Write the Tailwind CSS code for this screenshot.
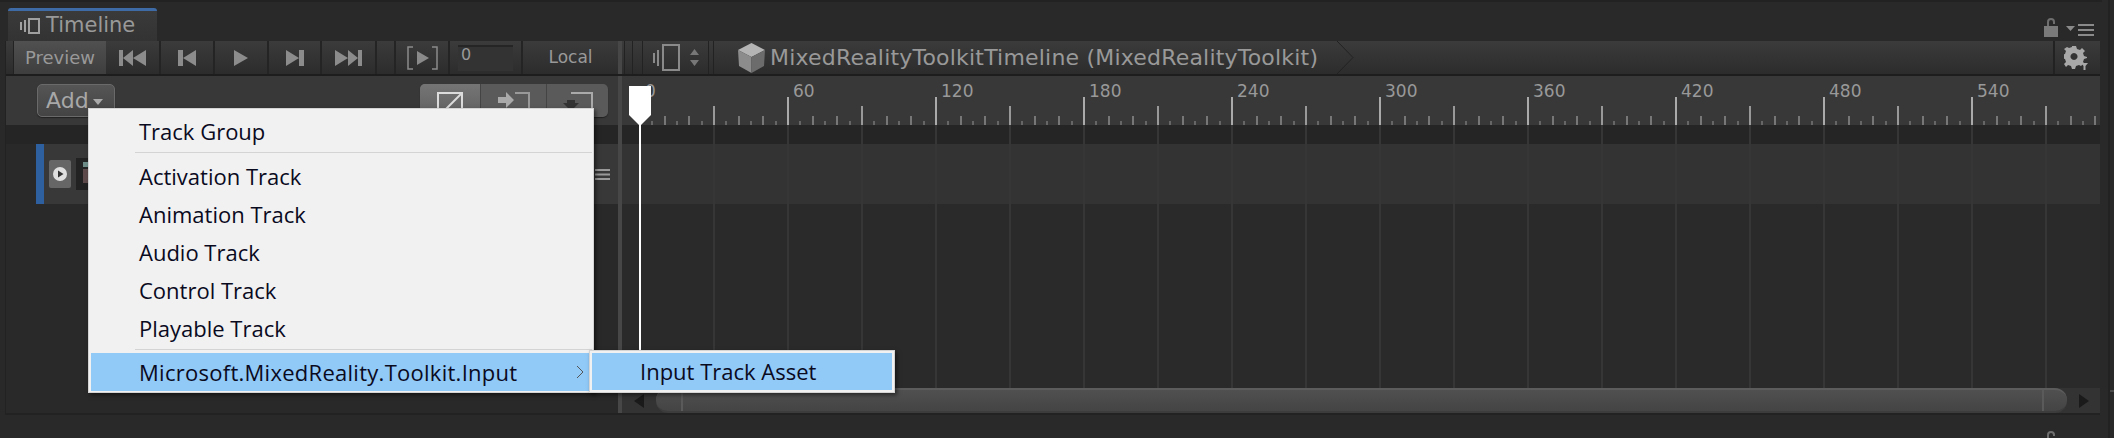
<!DOCTYPE html>
<html lang="en">
  <head>
    <meta charset="UTF-8" />
    <title>Timeline</title>
    <script src="https://cdn.jsdelivr.net/npm/@tailwindcss/browser@4"></script>
  </head>
  <body class="relative w-[2114px] h-[438px] overflow-hidden bg-[#292929] font-['DejaVu_Sans',sans-serif] text-[#999]">
    <div class="h-[2px] w-[2102px] bg-[#222]"></div>

    <!-- tab bar -->
    <div class="relative h-[39px] pl-[8px] pt-[6px]">
      <div class="flex h-[33px] w-[149px] items-center gap-[6px] rounded-t-[3px] border-t-[3px] border-[#3e6ba5] bg-gradient-to-b from-[#3a3a3a] to-[#333] pl-[12px] text-[21px] text-[#999]">
        <svg width="20" height="16" viewBox="0 0 20 16" fill="none" stroke="#a0a0a0" stroke-width="2"><path d="M1 4v8M5 2v12"/><rect x="9" y="1" width="10" height="14"/></svg>
        <span>Timeline</span>
      </div>
      <svg class="absolute left-[2044px] top-[16px]" width="14" height="19" viewBox="0 0 14 19" fill="none"><path d="M4 9V4a3 3 0 0 1 6 0v2" stroke="#6e6e6e" stroke-width="2"/><rect y="8" width="14" height="11" fill="#7a7a7a"/></svg>
      <svg class="absolute left-[2066px] top-[22px]" width="28" height="12" viewBox="0 0 28 12" fill="#8a8a8a"><path d="M0 2h9L4.500 7z"/><path d="M12 0h16v2H12zM12 5h16v2H12zM12 10h16v2H12z"/></svg>
    </div>

    <!-- panel -->
    <div class="ml-[5px] h-[374px] w-[2095px] border-b-2 border-l border-[#222]">
      <!-- toolbar -->
      <div class="flex h-[35px] border-b-2 border-[#1d1d1d] bg-gradient-to-b from-[#3b3b3b] to-[#2c2c2c] text-[17px] text-[#999]">
        <div class="flex w-[8px] border-r border-[#222]"></div>
        <div class="flex w-[92px] items-center justify-center bg-gradient-to-b from-[#505050] to-[#3e3e3e] text-[18px]">Preview</div>
        <div class="flex w-[55px] items-center justify-center border-r-2 border-[#242424]">
          <svg width="27" height="16" viewBox="0 0 27 16" fill="#8c8c8c"><path d="M0 0h4v16H0zM14 0v16L4 8zM27 0v16L14 8z"/></svg>
        </div>
        <div class="flex w-[54px] items-center justify-center border-r-2 border-[#242424]">
          <svg width="18" height="16" viewBox="0 0 18 16" fill="#8c8c8c"><path d="M0 0h5v16H0zM18 0v16L5 8z"/></svg>
        </div>
        <div class="flex w-[54px] items-center justify-center border-r-2 border-[#242424]">
          <svg width="14" height="16" viewBox="0 0 14 16" fill="#8c8c8c"><path d="M0 0v16l14-8z"/></svg>
        </div>
        <div class="flex w-[53px] items-center justify-center border-r-2 border-[#242424]">
          <svg width="18" height="16" viewBox="0 0 18 16" fill="#8c8c8c"><path d="M0 0v16l13-8zM13 0h5v16h-5z"/></svg>
        </div>
        <div class="flex w-[55px] items-center justify-center border-r-2 border-[#242424]">
          <svg width="27" height="16" viewBox="0 0 27 16" fill="#8c8c8c"><path d="M0 0v16l13-8zM13 0v16l10-8zM23 0h4v16h-4z"/></svg>
        </div>
        <div class="w-[19px] border-r-2 border-[#242424]"></div>
        <div class="flex w-[54px] items-center justify-center border-r-2 border-[#242424]">
          <svg width="31" height="24" viewBox="0 0 31 24" fill="none" stroke="#8a8a8a" stroke-width="1.500"><path d="M6 1H1v22h5M25 1h5v22h-5"/><path d="M10 5v14l12-7z" fill="#8a8a8a" stroke="none"/></svg>
        </div>
        <div class="flex w-[73px] items-center justify-center border-r-2 border-[#242424]">
          <div class="h-[26px] w-[55px] border-t-2 border-[#252525] bg-[#333] pl-[3px] text-[16px] leading-[15px]">0</div>
        </div>
        <div class="flex w-[95px] items-center justify-center">Local</div>
        <div class="w-[4px] bg-[#474747]"></div>
        <div class="w-[2px]"></div>
        <div class="w-[9px] border-x border-[#222]"></div>
        <div class="w-[10px] border-r border-[#222]"></div>
        <div class="flex w-[65px] items-center gap-[10px] pl-[10px]">
          <svg width="27" height="29" viewBox="0 0 27 29" fill="none" stroke="#8a8a8a" stroke-width="2"><path d="M1 10v10M5 7v16"/><rect x="10" y="2" width="16" height="25"/></svg>
          <svg width="9" height="17" viewBox="0 0 9 17" fill="#777"><path d="M4.500 0L9 6H0zM4.500 17L0 11h9z"/></svg>
        </div>
        <div class="w-[6px] border-x border-[#222]"></div>
        <div class="flex flex-1 items-center">
          <svg class="ml-[24px]" width="27" height="30" viewBox="0 0 27 30"><path d="M13.500 0L27 7l-13.500 7L0 7z" fill="#b4b4b4"/><path d="M0 7l13.500 7v16L1 23z" fill="#8c8c8c"/><path d="M27 7l-13.500 7v16L26 23z" fill="#6c6c6c"/></svg>
          <span class="ml-[5px] text-[22px] tracking-[0.2px]">MixedRealityToolkitTimeline (MixedRealityToolkit)</span>
          <svg class="ml-[19px]" width="17" height="33" viewBox="0 0 17 33" fill="none" stroke="#222" stroke-width="1"><path d="M0 0l16 16.500L0 33"/></svg>
        </div>
        <div class="flex w-[47px] items-center border-l-2 border-[#222] pl-[9px]">
          <svg width="24" height="24" viewBox="0 0 24 24" fill="#a8a8a8"><path fill-rule="evenodd" d="M8 0h4l1 3 3 1 2-2 3 3-2 2 1 3 3 1v1l-3 1-1 3 1 1-3 3-2-1-3 1-1 3H8l-1-3-3-1-2 2-2-3 2-2-1-3-3-1h0V9l3-1 1-3-2-2 3-2 2 1 3-1zM10 7a3.500 3.500 0 1 0 .01 0z"/><path d="M17 17h7l-2.500 3v4h-2v-4z"/></svg>
        </div>
      </div>

      <div class="flex h-[337px]">
        <!-- track list -->
        <div class="w-[612px]">
          <div class="flex h-[49px] items-start bg-[#383838] pt-[8px]">
            <div class="ml-[31px] flex h-[33px] w-[78px] items-center rounded-[5px] border border-[#6a6a6a] bg-gradient-to-b from-[#555] to-[#444] pl-[8px] text-[22px] text-[#a8a8a8] shadow-[0_1px_1px_#222]">
              Add
              <svg class="ml-[4px] mt-[3px]" width="10" height="6" viewBox="0 0 10 6" fill="#aaa"><path d="M0 0h10L5 6z"/></svg>
            </div>
            <div class="ml-auto mr-[10px] flex h-[33px] w-[188px] rounded-[5px] bg-[#5a5a5a] shadow-[0_1px_1px_#222]">
              <div class="flex w-[61px] justify-center rounded-l-[5px] border-r border-[#444] bg-gradient-to-b from-[#757575] to-[#606060] pt-[8px]">
                <svg width="26" height="26" viewBox="0 0 26 26" fill="none" stroke="#dcdcdc" stroke-width="2"><rect x="1" y="1" width="24" height="24"/><path d="M1 25L25 1"/></svg>
              </div>
              <div class="flex w-[66px] justify-center border-r border-[#444] pt-[8px]">
                <svg width="32" height="20" viewBox="0 0 32 20" fill="#aaa"><path d="M0 5h8V0l8 8-8 8v-5H0z"/><path d="M17 1h14v16H20" fill="none" stroke="#999" stroke-width="2"/></svg>
              </div>
              <div class="flex flex-1 justify-center pt-[8px]">
                <svg width="30" height="20" viewBox="0 0 30 20" fill="#333"><path d="M8 1h21v16H8" fill="none" stroke="#aaa" stroke-width="2"/><path d="M4 8h8v3h4l-8 8-8-8h4z"/></svg>
              </div>
            </div>
          </div>
          <div class="h-[19px] bg-[#252525]"></div>
          <div class="ml-[30px] flex h-[60px] items-center border-l-[8px] border-[#2e5f9e] bg-[#383838] pl-[5px]">
            <div class="flex h-[28px] w-[22px] items-center justify-center rounded-[2px] bg-[#666]">
              <svg width="14" height="14" viewBox="0 0 14 14"><circle cx="7" cy="7" r="7" fill="#e0e0e0"/><path d="M5 3.500v7L10.500 7z" fill="#333"/></svg>
            </div>
            <svg class="ml-[5px]" width="14" height="32" viewBox="0 0 14 32"><rect width="14" height="32" fill="#222"/><rect x="7" y="4" width="7" height="5" fill="#6d8c88"/><rect x="7" y="11" width="7" height="14" fill="#5e4a4a"/></svg>
            <svg class="ml-auto mr-[8px]" width="15" height="11" viewBox="0 0 15 11" fill="#999"><path d="M0 0h15v2H0zM0 4.500h15v2H0zM0 9h15v2H0z"/></svg>
          </div>
        </div>

        <!-- splitter -->
        <div class="w-[4px] bg-[#474747]"></div>

        <!-- timeline -->
        <div class="relative flex flex-1 flex-col">
          <div class="h-[49px] bg-[#383838]"></div>
          <div class="h-[19px] bg-[#252525]"></div>
          <div class="h-[60px] bg-[#333]"></div>
          <div class="h-[184px] bg-[#2a2a2a]"></div>
          <!-- scrollbar -->
          <div class="flex h-[25px] items-stretch bg-[#333]">
            <div class="flex w-[34px] items-center justify-center">
              <svg width="10" height="14" viewBox="0 0 10 14" fill="#1a1a1a"><path d="M10 0v14L0 7z"/></svg>
            </div>
            <div class="flex w-[1411px] rounded-[12px] border-t-2 border-b-2 border-t-[#5c5c5c] border-b-[#3c3c3c] bg-gradient-to-b from-[#505050] to-[#444]">
              <div class="w-[27px] border-r-2 border-[#5a5a5a]"></div>
              <div class="flex-1 border-r-2 border-[#5a5a5a]"></div>
              <div class="w-[23px]"></div>
            </div>
            <div class="flex flex-1 items-center justify-center">
              <svg width="10" height="14" viewBox="0 0 10 14" fill="#1a1a1a"><path d="M0 0v14l10-7z"/></svg>
            </div>
          </div>
          <svg id="ruler" class="absolute left-0 top-0" width="1478" height="312" viewBox="622 76 1478 312" font-size="17" fill="#999"></svg>
        </div>
      </div>
    </div>

    <!-- outer right edge -->
    <div class="absolute left-[2108px] top-0 h-[438px] w-[6px] border-l-2 border-[#222]">
      <div class="mt-[390px] h-[2px] bg-[#4a4a4a]"></div>
    </div>
    <svg class="absolute left-[2044px] top-[430px]" width="14" height="8" viewBox="0 0 14 8" fill="none"><path d="M4 8V5a3 3 0 0 1 6 0v1" stroke="#6e6e6e" stroke-width="2"/></svg>

    <!-- add menu -->
    <div class="absolute left-[88px] top-[108px] h-[285px] w-[506px] border border-[#d4d4d4] bg-[#f1f1f1] pl-[2px] pt-[4px] font-['Open_Sans',sans-serif] text-[22px] text-[#0a0a1e] shadow-[2px_2px_4px_rgba(0,0,0,0.5)]">
      <div class="flex h-[38px] items-center pb-[2px] pl-[48px]">Track Group</div>
      <div class="ml-[44px] mr-[1px] mb-[5px] mt-[1px] h-[1px] bg-[#d4d4d4]"></div>
      <div class="flex h-[38px] items-center pb-[2px] pl-[48px]">Activation Track</div>
      <div class="flex h-[38px] items-center pb-[2px] pl-[48px]">Animation Track</div>
      <div class="flex h-[38px] items-center pb-[2px] pl-[48px]">Audio Track</div>
      <div class="flex h-[38px] items-center pb-[2px] pl-[48px]">Control Track</div>
      <div class="flex h-[38px] items-center pb-[2px] pl-[48px]">Playable Track</div>
      <div class="ml-[44px] mr-[1px] mb-[3px] mt-[1px] h-[1px] bg-[#d4d4d4]"></div>
      <div class="flex h-[38px] items-center bg-[#91c9f7] pl-[48px] tracking-[0.27px]">
        Microsoft.MixedReality.Toolkit.Input
        <svg class="ml-auto mr-[9px]" width="8" height="14" viewBox="0 0 8 14" fill="none" stroke="#555" stroke-width="1"><path d="M1 1l6 6-6 6"/></svg>
      </div>
    </div>
    <div class="absolute left-[589px] top-[350px] h-[43px] w-[306px] border border-[#d4d4d4] bg-[#f1f1f1] p-[2px] font-['Open_Sans',sans-serif] text-[22px] text-[#0a0a1e] shadow-[2px_2px_4px_rgba(0,0,0,0.5)]">
      <div class="flex h-[37px] items-center bg-[#91c9f7] pl-[48px]">Input Track Asset</div>
    </div>

    <script>
      // ruler ticks, grid lines and playhead, drawn in page coordinates
      const ruler = document.getElementById("ruler");
      let out = "";
      const step = 74 / 6;
      for (let i = 0; i * step < 1470; i++) {
        const x = Math.round(640 + i * step);
        let top = 121, color = "#666";
        if (i % 12 === 0) { top = 97; color = "#aaa"; }
        else if (i % 6 === 0) { top = 106; color = "#999"; }
        else if (i % 2 === 0) { top = 116; color = "#777"; }
        out += `<rect x="${x - 1}" y="${top}" width="2" height="${125 - top}" fill="${color}"/>`;
        if (i % 6 === 0) out += `<rect x="${x - 1}" y="125" width="2" height="263" fill="#363636"/>`;
        if (i % 12 === 0) out += `<text x="${x + 5}" y="97">${(i / 12) * 60}</text>`;
      }
      out += `<path d="M629 86h22v29l-10 10h-2l-10-10z" fill="#fff"/><rect x="639" y="125" width="2" height="263" fill="#fff"/>`;
      ruler.innerHTML = out;
    </script>
  </body>
</html>
